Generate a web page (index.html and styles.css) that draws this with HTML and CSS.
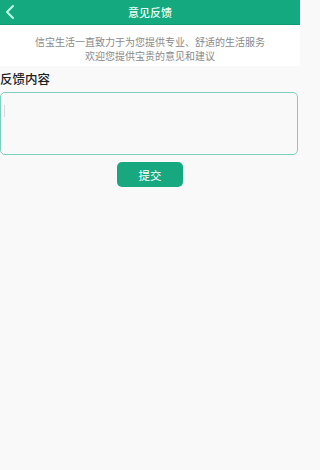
FILE: index.html
```html
<!DOCTYPE html>
<html lang="zh">
<head>
<meta charset="utf-8">
<link rel="stylesheet" href="styles.css">
</head>
<body>
<div class="page">
  <header class="topbar">
    <span class="back">
      <svg width="12" height="16" viewBox="0 0 12 16"><path d="M9 2 L3 8 L9 14" fill="none" stroke="#bff5e6" stroke-width="2" stroke-linecap="round" stroke-linejoin="round"/></svg>
    </span>
    <h1 class="title">意见反馈</h1>
  </header>
  <section class="intro">
    <p>信宝生活一直致力于为您提供专业、舒适的生活服务</p>
    <p>欢迎您提供宝贵的意见和建议</p>
  </section>
  <section class="form">
    <h2 class="label">反馈内容</h2>
    <div class="box"><span class="caret"></span></div>
    <div class="actions"><button class="submit">提交</button></div>
  </section>
</div>
</body>
</html>
```
FILE: styles.css
```css
html, body { margin: 0; padding: 0; }
body {
  background: #f9f9f9;
  font-family: "Noto Sans CJK SC", "Noto Sans", sans-serif;
  width: 300px;
  height: 470px;
  overflow: hidden;
}
.page { display: flex; flex-direction: column; }
.topbar {
  position: relative;
  height: 24px;
  background: #14a97e;
  border-bottom: 1px solid #0f9a72;
  display: flex;
  align-items: center;
  justify-content: center;
}
.back {
  position: absolute;
  left: 4px;
  top: 4px;
  display: flex;
}
.title {
  margin: 0;
  font-size: 11px;
  font-weight: 500;
  color: #e6fff6;
  line-height: 24px;
}
.intro {
  background: #ffffff;
  padding: 10px 0 3px;
  text-align: center;
}
.intro p {
  margin: 0;
  font-size: 10px;
  line-height: 14px;
  color: #8a8a8a;
}
.form { display: flex; flex-direction: column; }
.label {
  margin: 3px 0 0;
  font-size: 12.5px;
  font-weight: 500;
  color: #222;
  line-height: 20px;
}
.box {
  margin-top: 3px;
  height: 61px;
  width: 296px;
  border: 1.5px solid #7ed0bd;
  border-radius: 5px;
  background: #f9f9f9;
  position: relative;
}
.caret {
  position: absolute;
  left: 3px;
  top: 12px;
  width: 1px;
  height: 12px;
  background: #d8d8d8;
}
.actions { display: flex; justify-content: center; margin-top: 7px; }
.submit {
  width: 66px;
  height: 25px;
  border: none;
  border-radius: 5px;
  background: #17a880;
  color: #ffffff;
  font-family: inherit;
  font-size: 11.5px;
  padding: 0;
}
```
